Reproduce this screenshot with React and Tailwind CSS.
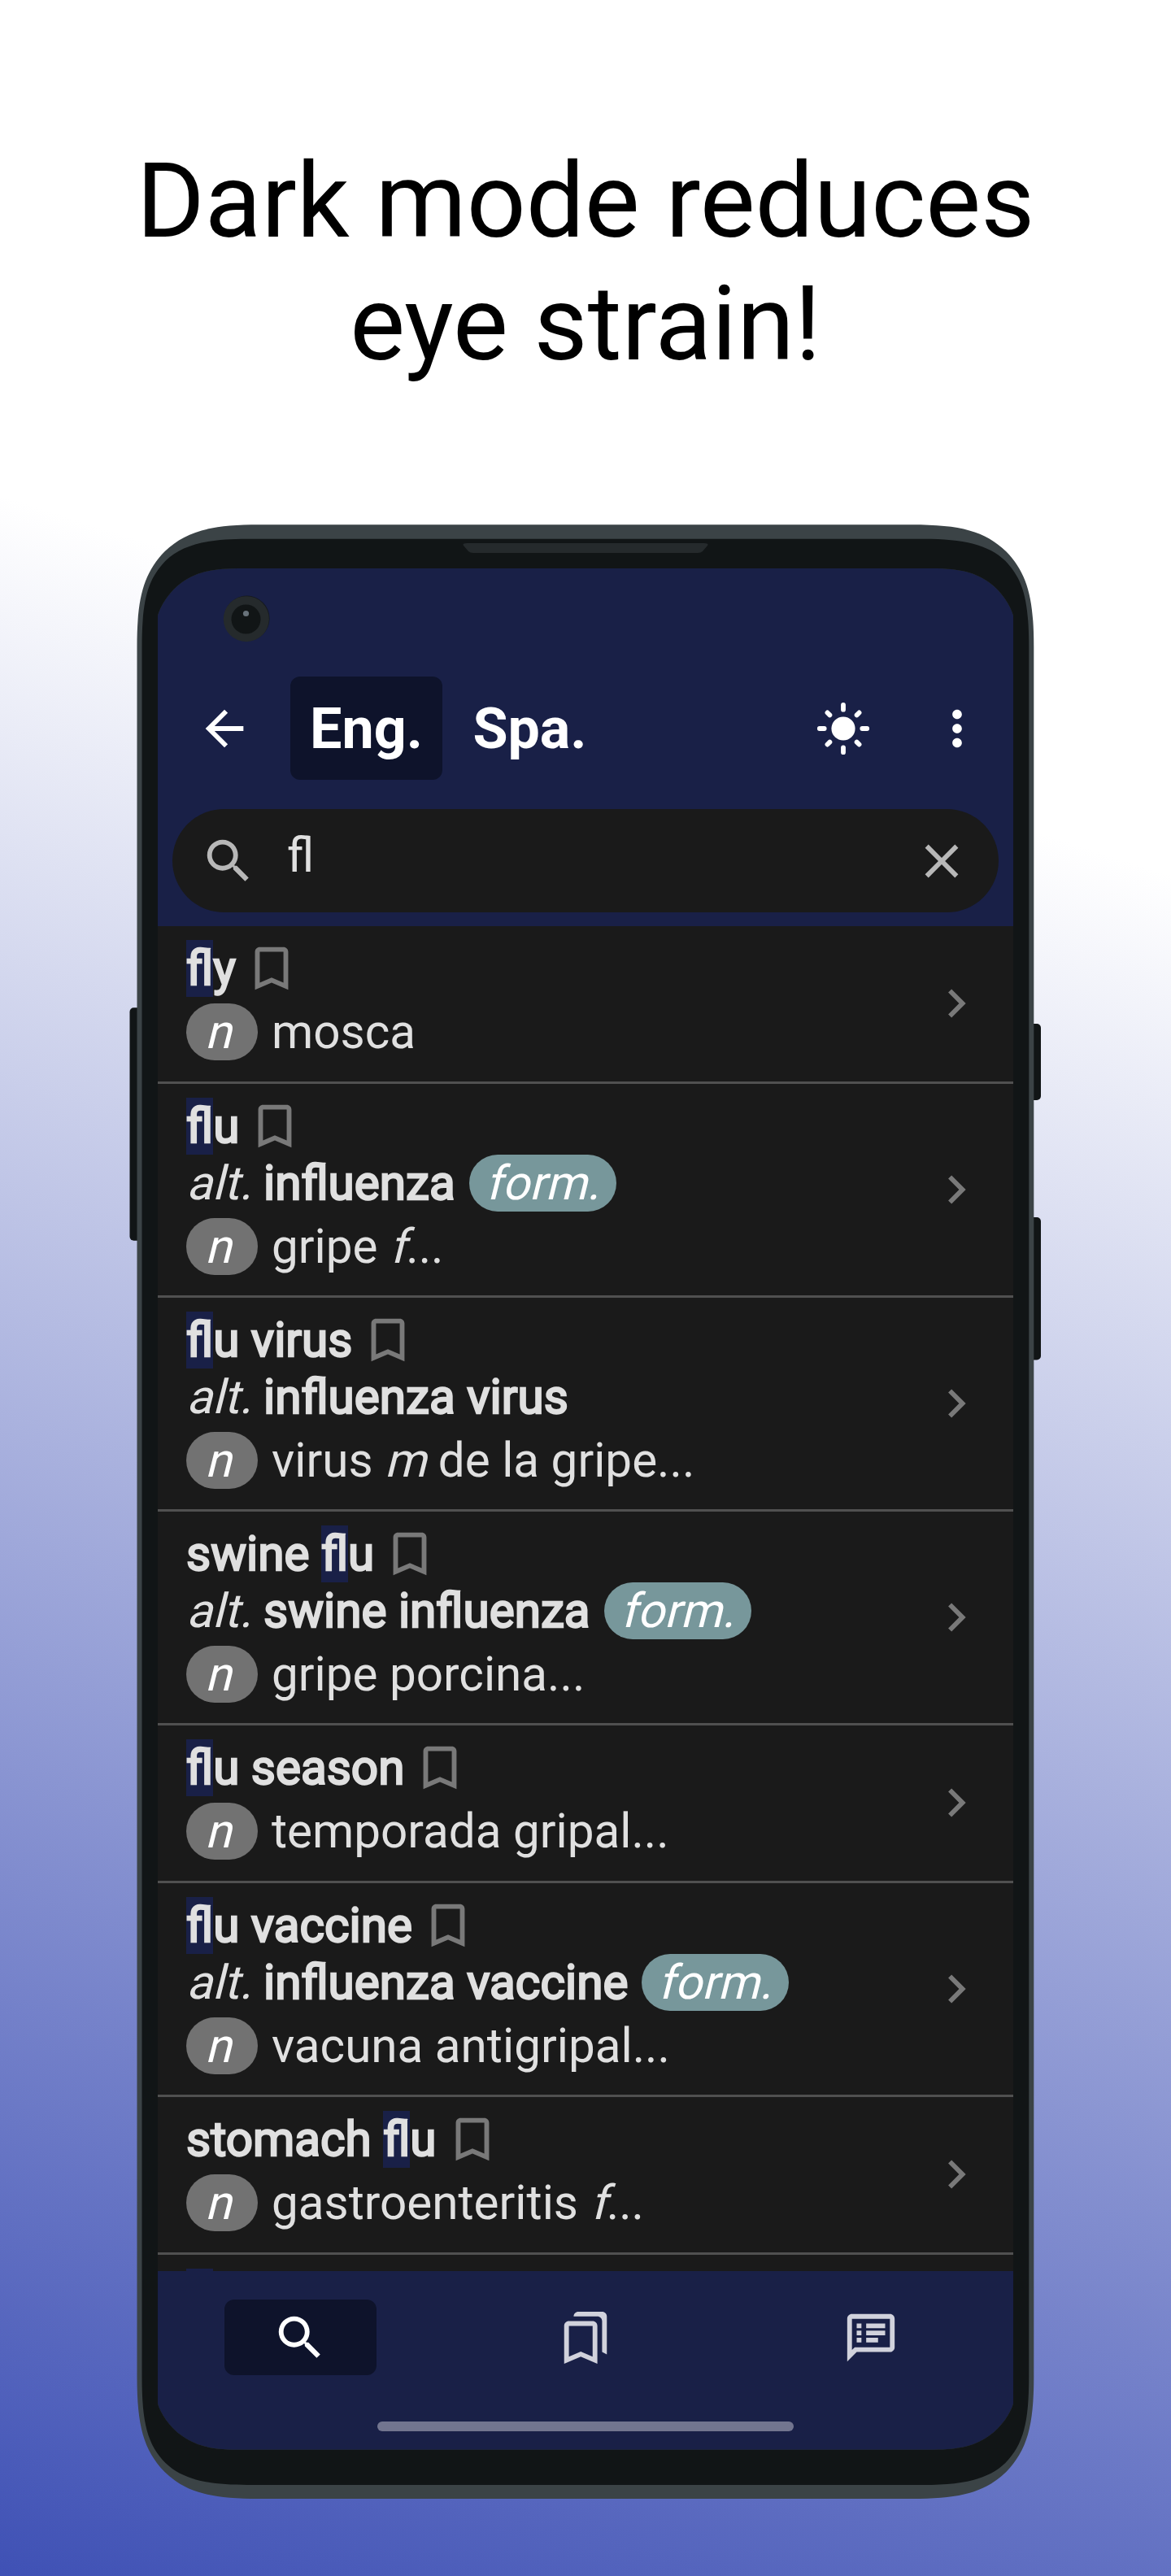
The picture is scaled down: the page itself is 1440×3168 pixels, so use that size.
const ICONS = {
  back: "M20 11H7.83l5.59-5.59L12 4l-8 8 8 8 1.41-1.41L7.83 13H20v-2z",
  more: "M12 8c1.1 0 2-.9 2-2s-.9-2-2-2-2 .9-2 2 .9 2 2 2zm0 2c-1.1 0-2 .9-2 2s.9 2 2 2 2-.9 2-2-.9-2-2-2zm0 6c-1.1 0-2 .9-2 2s.9 2 2 2 2-.9 2-2-.9-2-2-2z",
  search:
    "M15.5 14h-.79l-.28-.27A6.471 6.471 0 0 0 16 9.5 6.5 6.5 0 1 0 9.5 16c1.61 0 3.09-.59 4.23-1.57l.27.28v.79l5 4.99L20.49 19l-4.99-5zm-6 0C7.01 14 5 11.99 5 9.5S7.01 5 9.5 5 14 7.01 14 9.5 11.99 14 9.5 14z",
  close:
    "M19 6.41L17.59 5 12 10.59 6.41 5 5 6.41 10.59 12 5 17.59 6.41 19 12 13.41 17.59 19 19 17.59 13.41 12 19 6.41z",
  bookmark:
    "M17 3H7c-1.1 0-2 .9-2 2v16l7-3 7 3V5c0-1.1-.9-2-2-2zm0 15l-5-2.18L7 18V5h10v13z",
  chevron: "M10 6L8.59 7.41 13.17 12l-4.58 4.59L10 18l6-6z",
  bookmarks:
    "M15 7v12.97l-4.21-1.81-.79-.34-.79.34L5 19.97V7h10m4-6H8.99C7.89 1 7 1.9 7 3h10c1.1 0 2 .9 2 2v13l2 1V3c0-1.1-.9-2-2-2zm-4 4H5c-1.1 0-2 .9-2 2v16l7-3 7 3V7c0-1.1-.9-2-2-2z",
  notes:
    "M20 2H4c-1.1 0-2 .9-2 2v18l4-4h14c1.1 0 2-.9 2-2V4c0-1.1-.9-2-2-2zm0 14H5.17L4 17.17V4h16v12zM6 12h2v2H6zm0-3h2v2H6zm0-3h2v2H6zm4 6h5v2h-5zm0-3h8v2h-8zm0-3h8v2h-8z",
};

function Icon({ name, className = "" }) {
  return (
    <svg viewBox="0 0 24 24" fill="currentColor" className={`size-[70px] shrink-0 ${className}`}>
      <path d={ICONS[name]} />
    </svg>
  );
}

function SunIcon() {
  return (
    <svg viewBox="0 0 24 24" className="size-[70px] shrink-0 text-white">
      <circle cx="12" cy="12" r="5" fill="currentColor" />
      <path
        d="M12 2v2M12 20v2M2 12h2M20 12h2M5.3 5.3l1 1M17.7 17.7l1 1M5.3 18.7l1-1M17.7 6.3l1-1"
        stroke="currentColor"
        strokeWidth="2"
        strokeLinecap="round"
      />
    </svg>
  );
}

const ENTRIES = [
  { head: ["", "fl", "y"], text: "mosca" },
  { head: ["", "fl", "u"], alt: "influenza", formal: true, text: "gripe ", gender: "f", rest: "..." },
  { head: ["", "fl", "u virus"], alt: "influenza virus", text: "virus ", gender: "m", rest: " de la gripe..." },
  { head: ["swine ", "fl", "u"], alt: "swine influenza", formal: true, text: "gripe porcina..." },
  { head: ["", "fl", "u season"], text: "temporada gripal..." },
  { head: ["", "fl", "u vaccine"], alt: "influenza vaccine", formal: true, text: "vacuna antigripal..." },
  { head: ["stomach ", "fl", "u"], text: "gastroenteritis ", gender: "f", rest: "..." },
];

const BOLD = "font-normal [-webkit-text-stroke:2.3px_#e0e0e0]";

/* Upright letters slanted around their baseline. */
function Slanted({ children }) {
  return <i className="inline-block origin-[0_79%] skew-x-[-14deg] not-italic">{children}</i>;
}

function Entry({ entry }) {
  const [before, match, after] = entry.head;
  return (
    <li className="flex shrink-0 items-center border-b-[3px] border-[#505050] px-[35px]">
      <div className={`flex flex-1 flex-col pt-[17px] ${entry.alt ? "pb-[25px]" : "pb-[26px]"}`}>
        <div className="flex h-[70px] items-center">
          <span className={`whitespace-pre ${BOLD}`}>
            {before}
            <mark className="inline-block h-[70px] bg-[#192047] text-inherit">{match}</mark>
            {after}
          </span>
          <Icon name="bookmark" className="ml-[9px] text-[#797979]" />
        </div>
        {entry.alt && (
          <div className="mb-px flex h-[69px] items-center">
            <span className="w-[95px]">
              <Slanted>alt.</Slanted>
            </span>
            <span className={BOLD}>{entry.alt}</span>
            {entry.formal && (
              <span className="ml-[17px] h-[70px] w-[181px] rounded-full bg-[#77979b] pl-[20px] text-white">
                <Slanted>form.</Slanted>
              </span>
            )}
          </div>
        )}
        <div className="mt-[8px] flex h-[70px] items-center">
          <span className="h-[70px] w-[88px] rounded-full bg-[#727272] pl-[23px] text-white">
            <Slanted>n</Slanted>
          </span>
          <span className="ml-[17px] whitespace-pre">
            {entry.text}
            {entry.gender && <Slanted>{entry.gender}</Slanted>}
            {entry.rest}
          </span>
        </div>
      </div>
      <Icon name="chevron" className="mb-px text-[#797979]" />
    </li>
  );
}

/* Phone body, bezel, speaker, camera and side buttons, drawn around the screen opening. */
function PhoneFrame() {
  return (
    <svg
      viewBox="159 645 1122 2429"
      className="pointer-events-none absolute top-0 left-0 h-[2429px] w-[1122px]"
    >
      <g fill="#111516">
        <rect x="159.5" y="1239.3" width="18" height="286.5" rx="5" />
        <rect x="1262" y="1259" width="18" height="94" rx="5" />
        <rect x="1262" y="1497" width="18" height="175.5" rx="5" />
      </g>
      <path
        fill="#3b4346"
        fillRule="evenodd"
        d="M168.5 795.3C168.5 735.3 176.5 705.3 202.5 678.3C228.5 653.3 258.5 645.3 318.5 645.3H1121.3C1181.3 645.3 1211.3 653.3 1237.3 678.3C1263.3 705.3 1271.3 735.3 1271.3 795.3V2923C1271.3 2983 1263.3 3013 1237.3 3040C1211.3 3065 1181.3 3073 1121.3 3073H318.5C258.5 3073 228.5 3065 202.5 3040C176.5 3013 168.5 2983 168.5 2923Z
        M194 757V2956C197 2967 208 2984.800 224 2995.800C244 3009.800 264 3012.800 298 3012.800H1142C1176 3012.800 1196 3009.800 1216 2995.800C1232 2984.800 1243 2967 1246 2956V757C1243 746 1232 727 1216 716C1196 702 1176 699 1142 699H298C264 699 244 702 224 716C208 727 197 746 194 757Z"
      />
      <path
        fill="#111516"
        fillRule="evenodd"
        d="M174.500 797C174.500 737.700 181.500 712.700 203.500 689.700C224.500 669.700 254.500 662.700 304.500 662.700H1135.300C1185.300 662.700 1215.300 669.700 1236.300 689.700C1258.300 712.700 1265.300 737.700 1265.300 797V2922C1265.300 2981 1258.300 3006 1236.300 3029C1215.300 3049 1185.300 3056 1135.300 3056H304.500C254.500 3056 224.500 3049 203.500 3029C181.500 3006 174.500 2981 174.500 2922Z
        M194 757V2956C197 2967 208 2984.800 224 2995.800C244 3009.800 264 3012.800 298 3012.800H1142C1176 3012.800 1196 3009.800 1216 2995.800C1232 2984.800 1243 2967 1246 2956V757C1243 746 1232 727 1216 716C1196 702 1176 699 1142 699H298C264 699 244 702 224 716C208 727 197 746 194 757Z"
      />
      <path fill="#252a2c" d="M574 668H866Q872 668 870 671L864 678Q862 680 858 680H582Q578 680 576 678L570 671Q568 668 574 668Z" />
      <circle cx="303.500" cy="760.500" r="28" fill="#15191f" />
      <circle cx="302.800" cy="761.200" r="28" fill="#252a2c" />
      <circle cx="302.500" cy="761.500" r="18" fill="#111516" />
      <circle cx="302.500" cy="754.500" r="3.600" fill="#68727a" />
    </svg>
  );
}

export default function App() {
  return (
    <main className="flex h-[3168px] w-[1440px] flex-col items-center overflow-hidden bg-[linear-gradient(198deg,#ffffff_29.6%,#3f51b5_100%)] font-[Roboto,sans-serif]">
      <h1 className="mt-[172px] h-[303px] text-center text-[128px] leading-[151px] text-black">
        Dark mode reduces
        <br />
        eye strain!
      </h1>

      <div className="relative mt-[170px] h-[2429px] w-[1122px] px-[35px] pt-[54px] pb-[61px]">
        <div className="flex h-full flex-col overflow-hidden bg-[#1a1a1a] text-[58.4px] leading-[70px] text-[#e0e0e0]">
          <header className="flex h-[440px] shrink-0 flex-col bg-[#192047] px-[18px] pt-[133px]">
            <div className="flex h-[127px] items-center text-[70px] font-bold text-white">
              <Icon name="back" className="ml-[29px]" />
              <div className="ml-[46px] flex h-full w-[187px] items-center justify-center rounded-[12px] bg-[#0e132b]">
                Eng.
              </div>
              <div className="flex h-full w-[215px] items-center justify-center">Spa.</div>
              <div className="mr-[16px] ml-auto flex items-center gap-[70px]">
                <SunIcon />
                <Icon name="more" />
              </div>
            </div>
            <div className="mt-[36px] flex h-[127px] items-center rounded-full bg-[#1a1a1a] pr-[35px] pl-[34px] text-[#b8b8b8]">
              <Icon name="search" />
              <span className="mb-[13px] ml-[37px] flex-1 text-[#e0e0e0]">fl</span>
              <Icon name="close" />
            </div>
          </header>

          <ul className="flex min-h-0 flex-1 flex-col overflow-hidden">
            {ENTRIES.map((entry, i) => (
              <Entry key={i} entry={entry} />
            ))}
            <li className="shrink-0 pt-[17px] pl-[35px]">
              <div className="h-[70px] w-[33px] bg-[#192047]" />
            </li>
          </ul>

          <nav className="flex h-[220px] shrink-0 flex-col items-center bg-[#192047] pt-[35px] text-[#d1d2dc]">
            <div className="grid w-full grid-cols-3 justify-items-center">
              <div className="flex h-[93px] w-[187px] items-center justify-center rounded-[12px] bg-[#0e132b] text-white">
                <Icon name="search" />
              </div>
              <div className="flex h-[93px] items-center">
                <Icon name="bookmarks" />
              </div>
              <div className="flex h-[93px] items-center">
                <Icon name="notes" />
              </div>
            </div>
            <div className="mt-[57px] h-[12px] w-[512px] rounded-full bg-[#72758f]" />
          </nav>
        </div>
        <PhoneFrame />
      </div>
    </main>
  );
}
